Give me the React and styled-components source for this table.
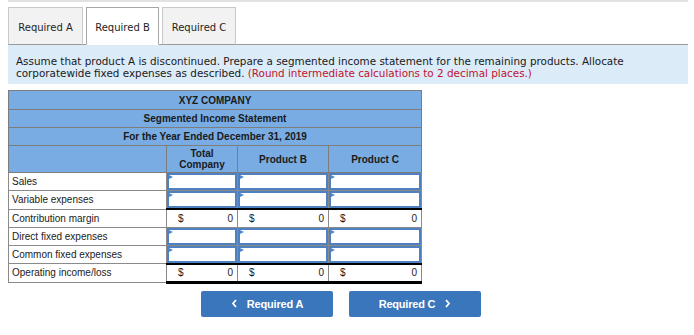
import React from "react";
import styled, { createGlobalStyle, css } from "styled-components";

const Global = createGlobalStyle`
  html, body { margin: 0; padding: 0; background: #ffffff; }
  body { font-family: "DejaVu Sans", Verdana, sans-serif; }
`;

const Page = styled.div`
  width: 680px;
  padding-left: 8px;
`;

const TopBar = styled.div`
  height: 2px;
  background: #e2e2e2;
`;

const Tabs = styled.div`
  display: flex;
  gap: 3px;
  margin-top: 5px;
  position: relative;
  z-index: 1;
`;

const Tab = styled.div`
  box-sizing: border-box;
  width: ${(p) => p.$w}px;
  height: 38px;
  display: flex;
  align-items: center;
  justify-content: center;
  font-family: "DejaVu Sans", Verdana, sans-serif;
  font-size: 10px;
  color: #1e1e1e;
  border: 1px solid ${(p) => (p.$active ? "#a6a6a6" : "#c9c9c9")};
  border-bottom: 1px solid ${(p) => (p.$active ? "#ffffff" : "#9a9a9a")};
  background: ${(p) => (p.$active ? "#ffffff" : "#f2f2f2")};
  margin-bottom: -1px;
  padding-top: 2px;
`;

const Info = styled.div`
  box-sizing: border-box;
  height: 40px;
  border-top: 1px solid #9a9a9a;
  background: #dcebf8;
  padding: 10px 8px 0 8px;
  font-family: "DejaVu Sans", Verdana, sans-serif;
  font-size: 10.4px;
  line-height: 12px;
  color: #1a1a1a;
  white-space: nowrap;
`;

const Note = styled.span`
  color: #c0122e;
`;

const Statement = styled.table`
  border-collapse: collapse;
  table-layout: fixed;
  width: 413px;
  margin-top: 6px;
  font-family: "Liberation Sans", Arial, sans-serif;
  font-size: 10px;
  color: #1a1a1a;
`;

const TitleCell = styled.td`
  background: #78ace2;
  border: 1px solid #7d7d7d;
  text-align: center;
  font-weight: bold;
  height: ${(p) => p.$h || 17}px;
  padding: 0;
  line-height: 11px;
`;

const LabelCell = styled.td`
  border: 1px solid #8a8a8a;
  background: #ffffff;
  padding: 0 0 0 3px;
  height: 17px;
  white-space: nowrap;
`;

const InputCell = styled.td`
  border: 1px solid #8a8a8a;
  padding: 0;
  height: 17px;
`;

const InputBox = styled.div`
  box-sizing: border-box;
  height: 17px;
  border: 2px solid #4f80bf;
  background: #ffffff;
  position: relative;
  &::before {
    content: "";
    position: absolute;
    left: 0;
    top: 0;
    border-left: 4px solid #4f86d0;
    border-top: 2px solid transparent;
    border-bottom: 2px solid transparent;
  }
`;

const MoneyCell = styled.td`
  border: 1px solid #8a8a8a;
  border-top: 2px solid #000000;
  ${(p) =>
    p.$last &&
    css`
      border-bottom: 3px solid #000000;
    `}
  padding: 0 4px 0 11px;
  height: 16px;
  background: #ffffff;
`;

const Money = styled.div`
  display: flex;
  justify-content: space-between;
  align-items: center;
`;

const Buttons = styled.div`
  display: flex;
  gap: 16px;
  margin: 7px 0 0 193px;
`;

const NavButton = styled.div`
  box-sizing: border-box;
  width: 132px;
  height: 26px;
  border-radius: 2px;
  background: #3a76bb;
  color: #ffffff;
  display: flex;
  align-items: center;
  justify-content: center;
  gap: 9px;
  font-family: "Liberation Sans", Arial, sans-serif;
  font-weight: bold;
  font-size: 11px;
  letter-spacing: -0.2px;
`;

const Chevron = ({ dir }) => (
  <svg width="7" height="9" viewBox="0 0 7 9">
    <path
      d={dir === "left" ? "M5 1 L2 4.5 L5 8" : "M2 1 L5 4.5 L2 8"}
      fill="none"
      stroke="#ffffff"
      strokeWidth="1.8"
    />
  </svg>
);

const rows = [
  { label: "Sales", kind: "input" },
  { label: "Variable expenses", kind: "input" },
  { label: "Contribution margin", kind: "money" },
  { label: "Direct fixed expenses", kind: "input" },
  { label: "Common fixed expenses", kind: "input" },
  { label: "Operating income/loss", kind: "money", last: true },
];

export default function App() {
  return (
    <>
      <Global />
      <Page>
        <TopBar />
        <Tabs>
          <Tab $w={75}>Required A</Tab>
          <Tab $w={73} $active>
            Required B
          </Tab>
          <Tab $w={74}>Required C</Tab>
        </Tabs>
        <Info>
          Assume that product A is discontinued. Prepare a segmented income statement for the remaining products. Allocate
          <br />
          corporatewide fixed expenses as described. <Note>(Round intermediate calculations to 2 decimal places.)</Note>
        </Info>
        <Statement>
          <colgroup>
            <col style={{ width: 158 }} />
            <col style={{ width: 71 }} />
            <col style={{ width: 91 }} />
            <col style={{ width: 93 }} />
          </colgroup>
          <tbody>
            <tr>
              <TitleCell colSpan={4} $h={18}>
                XYZ COMPANY
              </TitleCell>
            </tr>
            <tr>
              <TitleCell colSpan={4}>Segmented Income Statement</TitleCell>
            </tr>
            <tr>
              <TitleCell colSpan={4}>For the Year Ended December 31, 2019</TitleCell>
            </tr>
            <tr>
              <TitleCell $h={26} />
              <TitleCell $h={26}>
                Total
                <br />
                Company
              </TitleCell>
              <TitleCell $h={26}>Product B</TitleCell>
              <TitleCell $h={26}>Product C</TitleCell>
            </tr>
            {rows.map((r) => (
              <tr key={r.label}>
                <LabelCell>{r.label}</LabelCell>
                {[0, 1, 2].map((i) =>
                  r.kind === "input" ? (
                    <InputCell key={i}>
                      <InputBox />
                    </InputCell>
                  ) : (
                    <MoneyCell key={i} $last={r.last}>
                      <Money>
                        <span>$</span>
                        <span>0</span>
                      </Money>
                    </MoneyCell>
                  )
                )}
              </tr>
            ))}
          </tbody>
        </Statement>
        <Buttons>
          <NavButton>
            <Chevron dir="left" />
            Required A
          </NavButton>
          <NavButton>
            Required C
            <Chevron dir="right" />
          </NavButton>
        </Buttons>
      </Page>
    </>
  );
}
